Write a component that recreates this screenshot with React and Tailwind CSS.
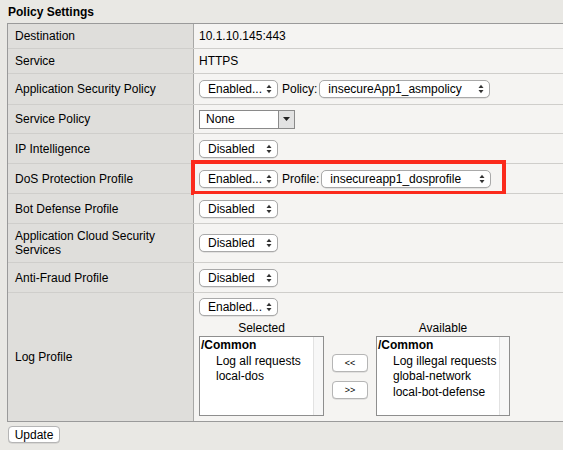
import React from "react";

const font = { fontFamily: '"Liberation Sans", Arial, Helvetica, sans-serif' };

function Arrows() {
  return (
    <svg width="6" height="10" viewBox="0 0 6 10" className="shrink-0">
      <path d="M0.5 4 L3 0.8 L5.5 4 Z" fill="#333" />
      <path d="M0.5 6 L3 9.2 L5.5 6 Z" fill="#333" />
    </svg>
  );
}

function Select({ label, w }) {
  return (
    <div
      className={`flex h-[18px] items-center justify-between rounded-[5px] border border-[#a9a9a9] bg-white pl-[8px] pr-[5px] text-[12px] leading-none text-black shadow-[0_0.5px_0.5px_rgba(0,0,0,0.15)] ${w}`}
    >
      <span>{label}</span>
      <Arrows />
    </div>
  );
}

function Row({ label, h, children, last }) {
  return (
    <div
      className={`flex ${h} ${last ? "border-b border-[#9a9a9a]" : "border-b border-[#cfcecb]"}`}
    >
      <div className="flex w-[185px] shrink-0 items-center bg-[#dfdedb] pl-[7px] pr-2 text-[12px] leading-[14px] text-black">
        {label}
      </div>
      <div className="w-px shrink-0 bg-[#a8a8a6]" />
      <div className="relative flex flex-1 items-center bg-[#f5f4f2] pl-[5px] text-[12px] text-black">
        {children}
      </div>
    </div>
  );
}

function ListBox({ items, w }) {
  return (
    <div className={`flex h-[80px] border border-[#8e8e8e] bg-white ${w}`}>
      <div className="flex-1 pl-[1px] pt-[1px] text-[12px] leading-[15.5px] text-black">
        <div className="font-bold">/Common</div>
        {items.map((it) => (
          <div key={it} className="pl-[15px]">
            {it}
          </div>
        ))}
      </div>
      <div className="w-[10px] border-l border-[#e2e2e2] bg-[#f7f7f7]" />
    </div>
  );
}

function SmallButton({ children }) {
  return (
    <div className="flex h-[18px] w-[36px] items-center justify-center rounded-[4px] border border-[#b5b5b5] bg-white text-[9px] leading-none text-black shadow-[0_0.5px_0.5px_rgba(0,0,0,0.15)]">
      {children}
    </div>
  );
}

export default function App() {
  return (
    <div
      className="h-[450px] w-[563px] overflow-hidden bg-[#e9e8e4]"
      style={font}
    >
      <div className="flex h-[23px] items-center pl-[8px] pt-[1px] text-[12px] font-bold leading-none text-black">
        Policy Settings
      </div>
      <div className="ml-[7px] w-[570px] border-l border-t border-[#9a9a9a]">
        <Row label="Destination" h="h-[25px]">
          10.1.10.145:443
        </Row>
        <Row label="Service" h="h-[25px]">
          HTTPS
        </Row>
        <Row label="Application Security Policy" h="h-[31px]">
          <Select label="Enabled..." w="w-[79px]" />
          <span className="ml-[4px] mr-[2px]">Policy:</span>
          <Select label="insecureApp1_asmpolicy" w="w-[171px]" />
        </Row>
        <Row label="Service Policy" h="h-[29px]">
          <div className="flex h-[19px] w-[96px] border border-[#8a8a8a] bg-white">
            <div className="flex flex-1 items-center pl-[6px] text-[12px] leading-none">
              None
            </div>
            <div className="flex w-[16px] items-center justify-center border-l border-[#8a8a8a] bg-[#e2e2e2]">
              <svg width="7" height="4" viewBox="0 0 7 4">
                <path d="M0 0 L7 0 L3.5 4 Z" fill="#222" />
              </svg>
            </div>
          </div>
        </Row>
        <Row label="IP Intelligence" h="h-[30px]">
          <Select label="Disabled" w="w-[79px]" />
        </Row>
        <Row label="DoS Protection Profile" h="h-[30px]">
          <Select label="Enabled..." w="w-[79px]" />
          <span className="ml-[4px] mr-[2px]">Profile:</span>
          <Select label="insecureapp1_dosprofile" w="w-[170px]" />
          <div className="pointer-events-none absolute left-[-3px] top-[-4px] h-[35px] w-[315px] border-[4px] border-[#fb2a1c]" />
        </Row>
        <Row label="Bot Defense Profile" h="h-[30px]">
          <Select label="Disabled" w="w-[79px]" />
        </Row>
        <Row
          label={
            <span>
              Application Cloud Security
              <br />
              Services
            </span>
          }
          h="h-[39px]"
        >
          <Select label="Disabled" w="w-[79px]" />
        </Row>
        <Row label="Anti-Fraud Profile" h="h-[30px]">
          <Select label="Disabled" w="w-[79px]" />
        </Row>
        <Row label="Log Profile" h="h-[129px]" last>
          <div className="flex h-full flex-col pt-[5px]">
            <Select label="Enabled..." w="w-[79px]" />
            <div className="mt-[4px] flex items-start">
              <div className="flex w-[125px] flex-col items-center">
                <div className="h-[16px] text-[12px] leading-[16px]">Selected</div>
                <ListBox w="w-[125px]" items={["Log all requests", "local-dos"]} />
              </div>
              <div className="ml-[8px] mr-[8px] mt-[34px] flex flex-col gap-[9px]">
                <SmallButton>&lt;&lt;</SmallButton>
                <SmallButton>&gt;&gt;</SmallButton>
              </div>
              <div className="flex w-[134px] flex-col items-center">
                <div className="h-[16px] text-[12px] leading-[16px]">Available</div>
                <ListBox
                  w="w-[134px]"
                  items={["Log illegal requests", "global-network", "local-bot-defense"]}
                />
              </div>
            </div>
          </div>
        </Row>
      </div>
      <div className="ml-[8px] mt-[4px] flex h-[17px] w-[52px] items-center justify-center rounded-[4px] border border-[#b5b5b5] bg-white text-[12px] leading-none text-black shadow-[0_0.5px_0.5px_rgba(0,0,0,0.15)]">
        Update
      </div>
    </div>
  );
}
